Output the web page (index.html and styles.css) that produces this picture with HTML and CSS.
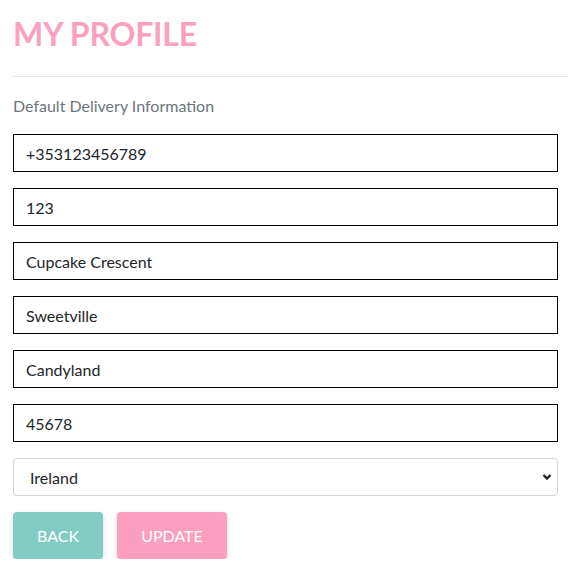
FILE: index.html
```html
<!DOCTYPE html>
<html>
<head>
<meta charset="utf-8">
<link rel="stylesheet" href="styles.css">
</head>
<body>
<div class="page">
  <h1 class="title">MY PROFILE</h1>
  <hr class="rule">
  <p class="subtitle">Default Delivery Information</p>
  <form class="form">
    <input class="field" type="text" value="+353123456789">
    <input class="field" type="text" value="123">
    <input class="field" type="text" value="Cupcake Crescent">
    <input class="field" type="text" value="Sweetville">
    <input class="field" type="text" value="Candyland">
    <input class="field" type="text" value="45678">
    <div class="select-wrap">
      <select class="select">
        <option>Ireland</option>
      </select>
      <svg class="chev" width="10" height="8" viewBox="0 0 10 8"><path d="M1.5 2 L5 5.5 L8.5 2" fill="none" stroke="#222" stroke-width="2.4"/></svg>
    </div>
    <div class="buttons">
      <button type="button" class="btn btn-back">BACK</button>
      <button type="button" class="btn btn-update">UPDATE</button>
    </div>
  </form>
</div>
</body>
</html>
```
FILE: styles.css
```css
html, body {
  margin: 0;
  padding: 0;
  background: #fff;
  overflow: hidden;
}
body {
  font-family: Lato, "Liberation Sans", sans-serif;
  color: #212529;
}
.page {
  padding: 0 10px 0 13px;
  width: 545px;
}
.title {
  margin: 0;
  padding-top: 14px;
  font-size: 32px;
  line-height: 40px;
  font-weight: 700;
  color: #fba0c0;
  letter-spacing: -0.2px;
}
.rule {
  margin: 22px -10px 0 0;
  border: 0;
  border-top: 1px solid #e6e6e6;
  height: 0;
}
.subtitle {
  margin: 19px 0 0;
  font-size: 16px;
  line-height: 20px;
  color: #6c757d;
}
.form {
  display: flex;
  flex-direction: column;
  gap: 16px;
  margin-top: 18px;
}
.field {
  box-sizing: border-box;
  width: 545px;
  height: 38px;
  margin: 0;
  border: 1px solid #000;
  border-radius: 0;
  padding: 0 12px;
  font-family: Lato, "Liberation Sans", sans-serif;
  font-size: 16px;
  color: #212529;
  background: #fff;
  outline: none;
}
.select-wrap {
  position: relative;
  width: 545px;
}
.select {
  box-sizing: border-box;
  width: 545px;
  height: 38px;
  margin: 0;
  border: 1px solid #ced4da;
  border-radius: 4px;
  padding: 0 12px 0 12px;
  font-family: Lato, "Liberation Sans", sans-serif;
  font-size: 16px;
  color: #212529;
  background: #fff;
  -webkit-appearance: none;
  appearance: none;
  text-indent: 4px;
}
.chev {
  position: absolute;
  right: 6px;
  top: 15px;
  pointer-events: none;
}
.buttons {
  display: flex;
  gap: 14px;
  margin-top: 0;
}
.btn {
  height: 47px;
  border: 0;
  border-radius: 4px;
  color: #fff;
  font-family: Lato, "Liberation Sans", sans-serif;
  font-size: 16px;
  font-weight: 400;
  box-shadow: 0 3px 6px rgba(0,0,0,0.15);
  padding: 0;
}
.btn-back {
  width: 90px;
  background: #82ccc4;
}
.btn-update {
  width: 110px;
  background: #fb9ebf;
}
```
